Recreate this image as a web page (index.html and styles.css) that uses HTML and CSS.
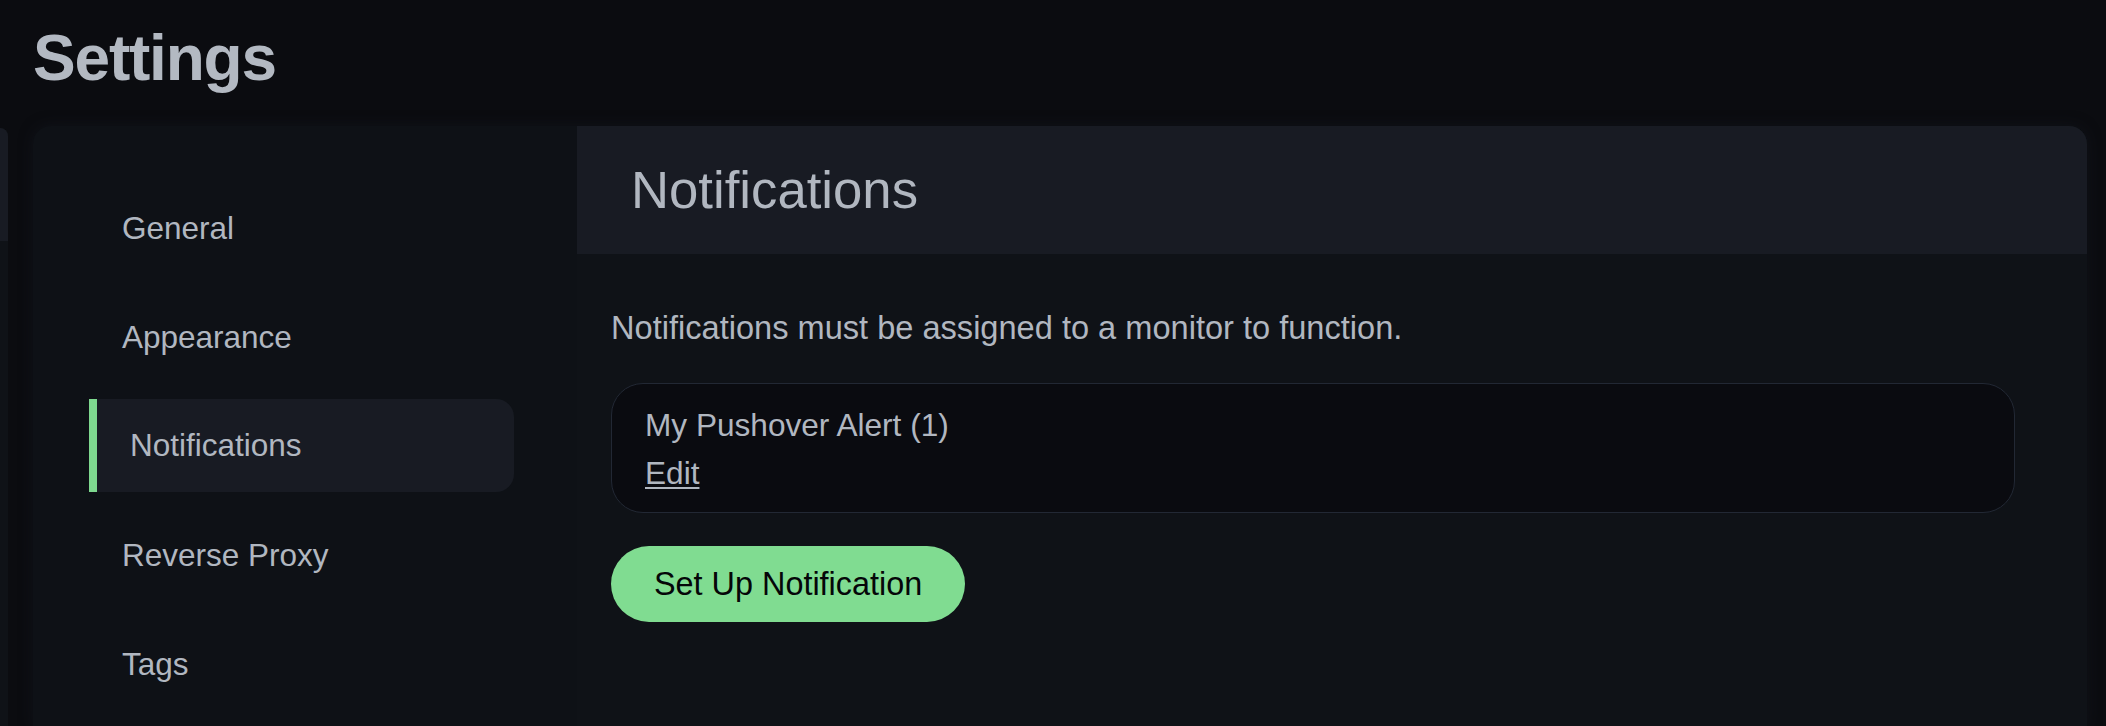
FILE: index.html
```html
<!DOCTYPE html>
<html lang="en">
<head>
<meta charset="utf-8">
<title>Settings</title>
<link rel="stylesheet" href="styles.css">
</head>
<body>
<div class="page">
  <h1 class="page-title">Settings</h1>
  <div class="layout">
    <div class="side-card">
      <div class="side-card-head"></div>
    </div>
    <div class="settings-card">
      <nav class="settings-nav">
        <div class="nav-item">General</div>
        <div class="nav-item">Appearance</div>
        <div class="nav-item active">Notifications</div>
        <div class="nav-item">Reverse Proxy</div>
        <div class="nav-item">Tags</div>
      </nav>
      <section class="settings-main">
        <header class="main-head">Notifications</header>
        <div class="main-body">
          <p class="hint">Notifications must be assigned to a monitor to function.</p>
          <div class="notif-list">
            <div class="notif-item">
              <div class="notif-name">My Pushover Alert (1)</div>
              <a class="notif-edit" href="#">Edit</a>
            </div>
          </div>
          <button class="btn-primary" type="button">Set Up Notification</button>
        </div>
      </section>
    </div>
  </div>
</div>
</body>
</html>
```
FILE: styles.css
```css
html, body {
  margin: 0;
  padding: 0;
  background: #0b0c10;
  height: 100%;
  overflow: hidden;
}
body {
  font-family: "Liberation Sans", Arial, Helvetica, sans-serif;
  color: #b1b7c0;
}
.page {
  padding-top: 26px;
}
.page-title {
  margin: 0;
  padding-left: 33px;
  font-size: 64px;
  line-height: 64px;
  font-weight: 700;
  letter-spacing: -1.2px;
  color: #b3b9c2;
}
.layout {
  display: flex;
  margin-top: 36px;
  gap: 25px;
}
.side-card {
  width: 8px;
  margin-top: 2px;
  height: 598px;
  background: #0f1217;
  border-radius: 0 8px 0 0;
  overflow: hidden;
}
.side-card-head {
  height: 113px;
  background: #181b23;
}
.settings-card {
  display: flex;
  width: 2054px;
  height: 600px;
  background: #0e1116;
  border-radius: 18px 18px 0 0;
  overflow: hidden;
  box-shadow: 0 0 14px rgba(20, 24, 32, 0.6);
}
.settings-nav {
  width: 544px;
  flex: none;
  padding: 56px 0 0 56px;
  box-sizing: border-box;
}
.nav-item {
  width: 425px;
  height: 93px;
  margin-bottom: 16px;
  box-sizing: border-box;
  padding-left: 33px;
  font-size: 31.5px;
  line-height: 93px;
  color: #b1b7c0;
}
.nav-item.active {
  background: #181b23;
  border-left: 8px solid #7ed98f;
  border-radius: 0 18px 18px 0;
  margin-top: -1px;
  margin-bottom: 17px;
}
.settings-main {
  flex: 1;
  background: #0f1217;
}
.main-head {
  height: 128px;
  background: #181b23;
  padding-left: 54px;
  font-size: 52.7px;
  line-height: 128px;
  color: #b1b7c0;
}
.main-body {
  padding: 54px 72px 0 34px;
}
.hint {
  margin: 0;
  font-size: 32.6px;
  line-height: 40px;
  color: #b1b7c0;
}
.notif-list {
  margin-top: 35px;
}
.notif-item {
  height: 130px;
  box-sizing: border-box;
  padding: 17px 33px 15px 33px;
  background: #0a0b10;
  border: 1px solid #222834;
  border-radius: 32px;
}
.notif-name {
  font-size: 31.6px;
  line-height: 48px;
  color: #b1b7c0;
}
.notif-edit {
  display: inline-block;
  font-size: 31.6px;
  line-height: 48px;
  color: #b1b7c0;
  text-decoration: underline;
  text-underline-offset: 3px;
  text-decoration-thickness: 1.5px;
}
.btn-primary {
  margin-top: 33px;
  height: 76px;
  padding: 0 43px;
  border: none;
  border-radius: 38px;
  background: #80dc91;
  color: #050608;
  font-family: "Liberation Sans", Arial, Helvetica, sans-serif;
  font-size: 32.4px;
  line-height: 76px;
  cursor: pointer;
}
```
